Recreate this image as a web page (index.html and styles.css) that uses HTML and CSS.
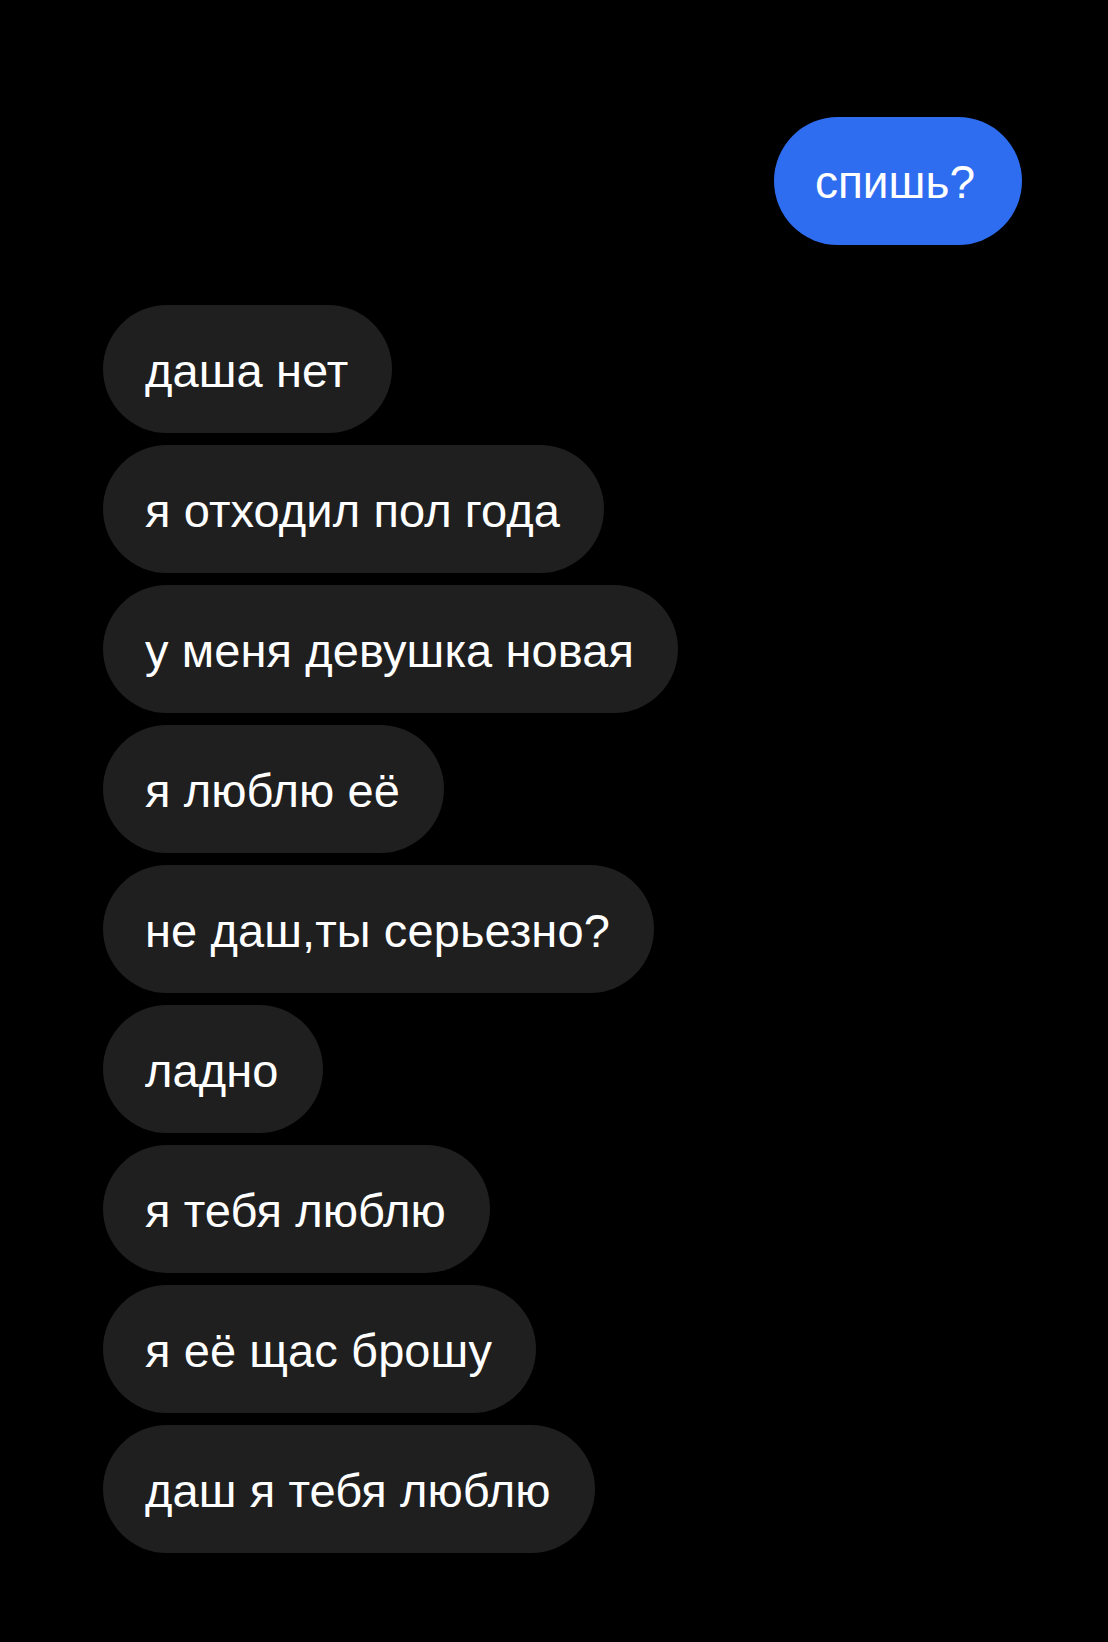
FILE: index.html
```html
<!DOCTYPE html>
<html lang="ru">
<head>
<meta charset="utf-8">
<title>Чат</title>
<link rel="stylesheet" href="styles.css">
</head>
<body>
<main class="chat">
  <div class="outgoing">
    <div class="bubble bubble-out">спишь?</div>
  </div>
  <div class="incoming">
    <div class="bubble bubble-in">даша нет</div>
    <div class="bubble bubble-in">я отходил пол года</div>
    <div class="bubble bubble-in">у меня девушка новая</div>
    <div class="bubble bubble-in">я люблю её</div>
    <div class="bubble bubble-in">не даш,ты серьезно?</div>
    <div class="bubble bubble-in">ладно</div>
    <div class="bubble bubble-in">я тебя люблю</div>
    <div class="bubble bubble-in">я её щас брошу</div>
    <div class="bubble bubble-in">даш я тебя люблю</div>
  </div>
</main>
</body>
</html>
```

FILE: styles.css
```css
html, body {
  margin: 0;
  padding: 0;
  background: #000;
}

body {
  width: 1108px;
  height: 1642px;
  overflow: hidden;
  font-family: "Liberation Sans", Arial, sans-serif;
  color: #fff;
}

.chat {
  display: flex;
  flex-direction: column;
  gap: 60px;
  padding: 117px 86px 0 103px;
}

.outgoing {
  display: flex;
  justify-content: flex-end;
}

.incoming {
  display: flex;
  flex-direction: column;
  align-items: flex-start;
  gap: 12px;
}

.bubble {
  box-sizing: border-box;
  height: 128px;
  display: flex;
  align-items: center;
  padding: 2px 44px 0 42px;
  border-radius: 64px;
  font-size: 47px;
  line-height: 1;
  letter-spacing: 0.1px;
  white-space: nowrap;
}

.bubble-out {
  background: #2f6df0;
  padding: 2px 47px 0 41px;
  font-size: 46px;
  letter-spacing: 0;
}

.bubble-in {
  background: #1f1f1f;
}
```
